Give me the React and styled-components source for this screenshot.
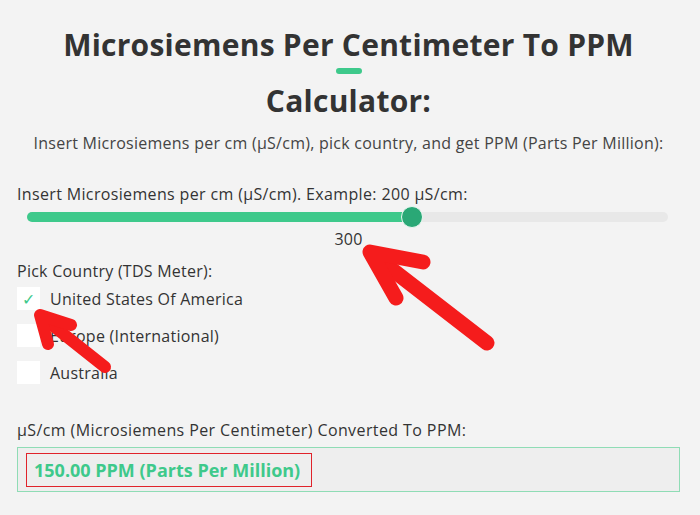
import styled, { createGlobalStyle } from "styled-components";

const GlobalStyle = createGlobalStyle`
  html, body {
    margin: 0;
    background: #f3f3f3;
  }
  body {
    font-family: "Open Sans", "Liberation Sans", sans-serif;
    color: #3a3a3a;
  }
`;

const Page = styled.div`
  position: relative;
  width: 700px;
  height: 515px;
  box-sizing: border-box;
  padding: 25px 20px 0 17px;
  overflow: hidden;
`;

const Heading = styled.h1`
  margin: 0;
  display: flex;
  flex-direction: column;
  align-items: center;
  font-size: 30px;
  font-weight: 700;
  letter-spacing: 0.25px;
  color: #333;
  line-height: 40px;
`;

const Underline = styled.span`
  display: block;
  width: 26px;
  height: 6px;
  border-radius: 3px;
  background: #3ec98b;
  margin: 3px 0 7px;
`;

const Intro = styled.p`
  margin: 12px 0 0;
  text-align: center;
  font-size: 16px;
  line-height: 20px;
  letter-spacing: 0.25px;
  color: #444;
`;

const Label = styled.div`
  font-size: 16px;
  line-height: 20px;
  letter-spacing: ${(p) => p.$spacing ?? 0.25}px;
  color: #333;
  margin-top: ${(p) => p.$top || 0}px;
`;

const SliderWrap = styled.div`
  padding: 8px 12px 0 10px;
`;

const Track = styled.div`
  position: relative;
  height: 10px;
  border-radius: 5px;
  background: #e8e8e8;
`;

const Fill = styled.div`
  height: 100%;
  border-radius: 5px;
  background: #3ec98b;
`;

const Thumb = styled.div`
  position: absolute;
  top: 50%;
  width: 20px;
  height: 20px;
  margin: -11px 0 0 -11px;
  border-radius: 50%;
  background: #2aa876;
  border: 1px solid #e9f7f0;
`;

const SliderValue = styled.div`
  text-align: center;
  font-size: 16px;
  line-height: 20px;
  letter-spacing: 0.25px;
  color: #333;
  margin-top: 7px;
`;

const Options = styled.div`
  display: flex;
  flex-direction: column;
  gap: 14px;
  margin-top: 6px;
`;

const Option = styled.label`
  display: flex;
  align-items: center;
  gap: 10px;
  height: 23px;
  font-size: 16px;
  letter-spacing: 0.25px;
  color: #333;
`;

const Box = styled.span`
  width: 23px;
  height: 23px;
  background: #fff;
  display: flex;
  align-items: center;
  justify-content: center;
  color: #3ec98b;
  font-size: 16px;
  font-weight: 400;
`;

const Result = styled.div`
  margin-top: 7px;
  height: 43px;
  border: 1px solid #8fdcb5;
  background: #eeeeee;
  display: flex;
  align-items: center;
  padding-left: 8px;
`;

const ResultText = styled.span`
  border: 1.5px solid #e0232b;
  padding: 4px 11px 4px 7px;
  font-size: 18px;
  line-height: 24px;
  font-weight: 700;
  color: #3ec98b;
`;

const Marks = styled.svg`
  position: absolute;
  left: 0;
  top: 0;
  pointer-events: none;
`;

const countries = ["United States Of America", "Europe (International)", "Australia"];

export default function App() {
  const value = 300;
  const max = 500;
  const pct = (value / max) * 100;

  return (
    <Page>
      <GlobalStyle />
      <Heading>
        <span>Microsiemens Per Centimeter To PPM</span>
        <Underline />
        <span>Calculator:</span>
      </Heading>
      <Intro>
        Insert Microsiemens per cm (µS/cm), pick country, and get PPM (Parts Per Million):
      </Intro>

      <Label $top={31} $spacing={0.35}>Insert Microsiemens per cm (µS/cm). Example: 200 µS/cm:</Label>
      <SliderWrap>
        <Track>
          <Fill style={{ width: pct + "%" }} />
          <Thumb style={{ left: pct + "%" }} />
        </Track>
      </SliderWrap>
      <SliderValue>{value}</SliderValue>

      <Label $top={12}>Pick Country (TDS Meter):</Label>
      <Options>
        {countries.map((c, i) => (
          <Option key={c}>
            <Box>{i === 0 ? "✓" : ""}</Box>
            {c}
          </Option>
        ))}
      </Options>

      <Label $top={36} $spacing={0.4}>µS/cm (Microsiemens Per Centimeter) Converted To PPM:</Label>
      <Result>
        <ResultText>150.00 PPM (Parts Per Million)</ResultText>
      </Result>

      {/* red pointer arrows */}
      <Marks width="700" height="515" viewBox="0 0 700 515">
        <g fill="none" stroke="#f51c1c" strokeLinecap="round" strokeLinejoin="round">
          <g strokeWidth="15">
            <path d="M487 343 L372 254" />
            <path d="M423 262 L370 252 L396 298" />
          </g>
          <g strokeWidth="12">
            <path d="M105 367 L42 317" />
            <path d="M71 325 L40 315 L48 344" />
          </g>
        </g>
      </Marks>
    </Page>
  );
}
